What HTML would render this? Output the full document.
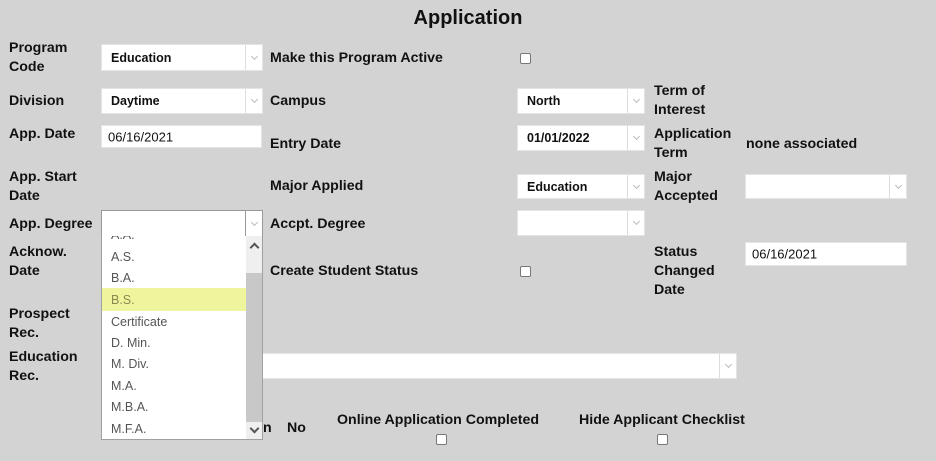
<!DOCTYPE html>
<html><head><meta charset="utf-8"><style>
*{margin:0;padding:0;box-sizing:border-box}
body{width:936px;height:461px;background:#d3d3d3;font-family:"Liberation Sans",sans-serif;position:relative;overflow:hidden;color:#111}
.a{position:absolute}
.l{position:absolute;font-weight:bold;font-size:14.2px;line-height:19px;white-space:nowrap;margin-top:1px}
.sel{position:absolute;background:#fff;border:1px solid #e4e4e4}
.sel .c{position:absolute;right:0;top:0;bottom:0;width:17px;border-left:1px solid #ddd;color:#aaa;font-size:9px;text-align:center}
.sel .c:after{content:"";position:absolute;left:6px;top:50%;width:4px;height:4px;border-right:1px solid #bbb;border-bottom:1px solid #bbb;transform:translateY(-4px) rotate(45deg)}
.sel span{position:absolute;left:9px;top:50%;transform:translateY(-50%);font-weight:bold;font-size:12.5px}
.inp{position:absolute;background:#fff;border:1px solid #e4e4e4;font-size:13px}
.inp span{position:absolute;left:6px;top:50%;transform:translateY(-50%)}
.cb{position:absolute;width:11px;height:11px;border:1px solid #777;border-radius:2px;background:#fff}
.it{position:absolute;left:9px;font-size:12.5px;color:#555;margin-top:1px}
</style></head><body>
<div class="a" style="left:0;width:936px;top:5px;text-align:center;font-weight:bold;font-size:20px;line-height:26px">Application</div>

<div class="l" style="left:9px;top:38px">Program<br>Code</div>
<div class="sel" style="left:101px;top:44px;width:162px;height:27px"><span>Education</span><div class="c"></div></div>
<div class="l" style="left:270px;top:48px">Make this Program Active</div>
<div class="cb" style="left:520px;top:53px"></div>

<div class="l" style="left:9px;top:91px">Division</div>
<div class="sel" style="left:101px;top:88px;width:162px;height:26px"><span>Daytime</span><div class="c"></div></div>
<div class="l" style="left:270px;top:91px">Campus</div>
<div class="sel" style="left:517px;top:88px;width:128px;height:26px"><span>North</span><div class="c"></div></div>
<div class="l" style="left:654px;top:81px">Term of<br>Interest</div>

<div class="l" style="left:9px;top:124px">App. Date</div>
<div class="inp" style="left:101px;top:125px;width:161px;height:23px"><span>06/16/2021</span></div>
<div class="l" style="left:270px;top:134px">Entry Date</div>
<div class="sel" style="left:517px;top:125px;width:128px;height:26px"><span>01/01/2022</span><div class="c"></div></div>
<div class="l" style="left:654px;top:124px">Application<br>Term</div>
<div class="l" style="left:746px;top:134px">none associated</div>

<div class="l" style="left:9px;top:167px">App. Start<br>Date</div>
<div class="l" style="left:270px;top:176px">Major Applied</div>
<div class="sel" style="left:517px;top:174px;width:128px;height:25px"><span>Education</span><div class="c"></div></div>
<div class="l" style="left:654px;top:167px">Major<br>Accepted</div>
<div class="sel" style="left:745px;top:174px;width:162px;height:25px"><div class="c"></div></div>

<div class="l" style="left:9px;top:214px">App. Degree</div>
<div class="sel" style="left:101px;top:210px;width:162px;height:27px;border-color:#999"><div class="c" style="border-left-color:#999"></div></div>
<div class="l" style="left:270px;top:214px">Accpt. Degree</div>
<div class="sel" style="left:517px;top:210px;width:128px;height:26px"><div class="c"></div></div>

<div class="l" style="left:9px;top:242px">Acknow.<br>Date</div>
<div class="l" style="left:270px;top:261px">Create Student Status</div>
<div class="cb" style="left:520px;top:266px"></div>
<div class="l" style="left:654px;top:242px">Status<br>Changed<br>Date</div>
<div class="inp" style="left:745px;top:242px;width:162px;height:24px"><span>06/16/2021</span></div>

<div class="l" style="left:9px;top:304px">Prospect<br>Rec.</div>
<div class="l" style="left:9px;top:347px">Education<br>Rec.</div>
<div class="sel" style="left:101px;top:353px;width:636px;height:26px"><div class="c"></div></div>

<div class="l" style="left:263px;top:418px">n</div>
<div class="l" style="left:287px;top:418px">No</div>
<div class="l" style="left:337px;top:410px">Online Application Completed</div>
<div class="cb" style="left:436px;top:434px"></div>
<div class="l" style="left:579px;top:410px">Hide Applicant Checklist</div>
<div class="cb" style="left:657px;top:434px"></div>

<div class="a" style="left:101px;top:236px;width:162px;height:204px;background:#fff;border:1px solid #a0a0a0;border-top:none;overflow:hidden">
  <div class="a" style="left:0;top:52px;width:144px;height:23px;background:#eef59c"></div>
  <div class="it" style="top:-9px">A.A.</div>
  <div class="it" style="top:13px">A.S.</div>
  <div class="it" style="top:34px">B.A.</div>
  <div class="it" style="top:56px;color:#8a8a50">B.S.</div>
  <div class="it" style="top:78px">Certificate</div>
  <div class="it" style="top:99px">D. Min.</div>
  <div class="it" style="top:120px">M. Div.</div>
  <div class="it" style="top:142px">M.A.</div>
  <div class="it" style="top:163px">M.B.A.</div>
  <div class="it" style="top:185px">M.F.A.</div>
  <div class="a" style="left:144px;top:0;width:17px;height:204px;background:#c8c8c8"></div>
  <div class="a" style="left:144px;top:0;width:17px;height:37px;background:#efefef"></div>
  <div class="a" style="left:144px;top:186px;width:17px;height:18px;background:#efefef"></div>
  <div class="a" style="left:149px;top:8px;width:7px;height:7px;border-left:2px solid #555;border-top:2px solid #555;transform:rotate(45deg)"></div>
  <div class="a" style="left:149px;top:189px;width:7px;height:7px;border-right:2px solid #555;border-bottom:2px solid #555;transform:rotate(45deg)"></div>
</div>
</body></html>
